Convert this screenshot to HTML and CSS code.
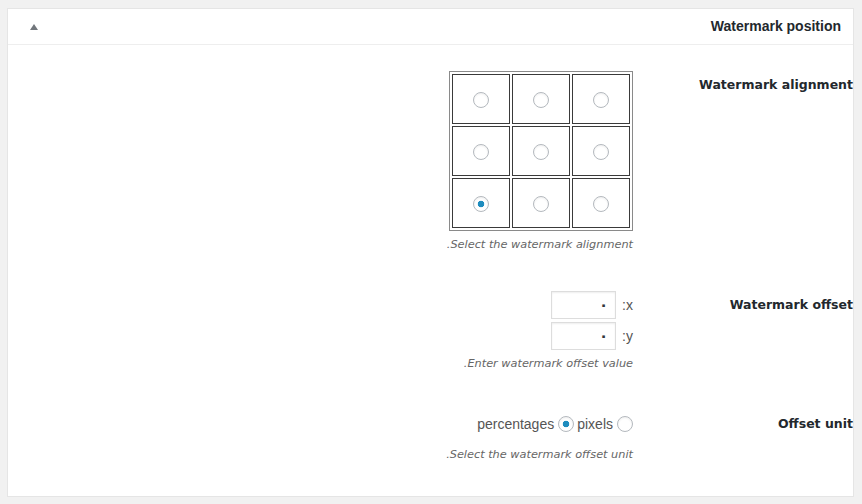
FILE: index.html
```html
<!DOCTYPE html>
<html dir="rtl" lang="en">
<head>
<meta charset="utf-8">
<title>Watermark position</title>
<link rel="stylesheet" href="styles.css">
</head>
<body>
<div class="postbox">
  <div class="postbox-header">
    <h2 class="hndle">Watermark position</h2>
    <button class="handlediv" type="button" aria-label="Toggle panel"><span class="toggle-arrow"></span></button>
  </div>
  <div class="inside">
    <table class="form-table">
      <tr>
        <th>Watermark alignment</th>
        <td>
          <table class="align-grid">
            <tr>
              <td><input type="radio" name="align" class="radio"></td>
              <td><input type="radio" name="align" class="radio"></td>
              <td><input type="radio" name="align" class="radio"></td>
            </tr>
            <tr>
              <td><input type="radio" name="align" class="radio"></td>
              <td><input type="radio" name="align" class="radio"></td>
              <td><input type="radio" name="align" class="radio"></td>
            </tr>
            <tr>
              <td><input type="radio" name="align" class="radio"></td>
              <td><input type="radio" name="align" class="radio"></td>
              <td><input type="radio" name="align" class="radio" checked></td>
            </tr>
          </table>
          <p class="description">Select the watermark alignment.</p>
        </td>
      </tr>
      <tr>
        <th>Watermark offset</th>
        <td>
          <div class="offset-fields">
            <label class="offset-line"><span class="axis">x:</span><input type="text" class="offset-input" value="٠"></label>
            <label class="offset-line"><span class="axis">y:</span><input type="text" class="offset-input" value="٠"></label>
          </div>
          <p class="description">Enter watermark offset value.</p>
        </td>
      </tr>
      <tr>
        <th>Offset unit</th>
        <td>
          <div class="unit-line">
            <label class="unit"><input type="radio" name="unit" class="radio"><span>pixels</span></label>
            <label class="unit"><input type="radio" name="unit" class="radio" checked><span>percentages</span></label>
          </div>
          <p class="description desc-unit">Select the watermark offset unit.</p>
        </td>
      </tr>
    </table>
  </div>
</div>
</body>
</html>
```
FILE: styles.css
```css
html {
  background: #f1f1f1;
}
body {
  margin: 8px 8px 0 7px;
  background: #f1f1f1;
  font-family: "DejaVu Sans", Tahoma, sans-serif;
  font-size: 13px;
  color: #444;
}
.postbox {
  background: #fff;
  border: 1px solid #e5e5e5;
  box-shadow: 0 1px 1px rgba(0, 0, 0, 0.04);
}
.postbox-header {
  display: flex;
  align-items: center;
  justify-content: space-between;
  border-bottom: 1px solid #eee;
}
.hndle {
  margin: 0;
  padding: 8px 12px;
  line-height: 19px;
  font-family: "Liberation Sans", Arial, sans-serif;
  font-size: 14px;
  font-weight: bold;
  color: #23282d;
}
.handlediv {
  width: 36px;
  height: 35px;
  margin: 0 0 0 8px;
  padding: 0;
  border: 0;
  background: none;
  display: flex;
  align-items: center;
  justify-content: center;
}
.toggle-arrow {
  width: 0;
  height: 0;
  border-left: 4px solid transparent;
  border-right: 4px solid transparent;
  border-bottom: 6px solid #72777c;
}
.inside {
  margin: 11px 0 0;
  padding: 0 0 10px;
}
.form-table {
  width: 100%;
  border-collapse: collapse;
}
.form-table > tbody > tr > th {
  width: 200px;
  padding: 20px 0 20px 10px;
  vertical-align: top;
  text-align: right;
  font-size: 12.5px;
  line-height: 18px;
  font-weight: bold;
  color: #23282d;
}
.form-table > tbody > tr > td {
  padding: 15px 10px;
  vertical-align: top;
}
.align-grid {
  border: 1px solid #8a8a8a;
  border-spacing: 2px;
  margin: 0;
}
.align-grid td {
  width: 56px;
  height: 48px;
  padding: 0;
  border: 1px solid #3a3a3a;
  text-align: center;
  vertical-align: middle;
}
.radio {
  -webkit-appearance: none;
  appearance: none;
  display: inline-block;
  width: 16px;
  height: 16px;
  margin: 0;
  border: 1px solid #b4b9be;
  border-radius: 50%;
  background: #fff;
  box-shadow: inset 0 1px 2px rgba(0, 0, 0, 0.07);
  vertical-align: middle;
}
.radio:checked {
  background: radial-gradient(circle, #1e8cbe 0, #1e8cbe 3px, #fff 3.6px);
}
.align-grid .radio {
  margin-top: 2px;
}
.description {
  margin: 5px 0 7px;
  font-size: 11.3px;
  line-height: 18px;
  font-style: italic;
  color: #666;
}
.desc-unit {
  margin-top: 8px;
}
.offset-fields {
  display: flex;
  flex-direction: column;
  gap: 3px;
}
.offset-line {
  display: flex;
  align-items: center;
  gap: 6px;
}
.axis {
  font-family: "Liberation Sans", Arial, sans-serif;
  font-size: 14px;
  color: #555;
}
.offset-input {
  width: 65px;
  height: 28px;
  box-sizing: border-box;
  margin: 0;
  padding: 0 7px 0 4px;
  border: 1px solid #ddd;
  box-shadow: inset 0 1px 2px rgba(0, 0, 0, 0.07);
  background: #fff;
  color: #32373c;
  font-family: "DejaVu Sans", sans-serif;
  font-size: 15px;
  font-weight: bold;
  text-align: right;
  direction: rtl;
}
.unit-line {
  display: flex;
  align-items: center;
  height: 28px;
  gap: 3px;
}
.unit {
  display: flex;
  align-items: center;
  gap: 4px;
  font-family: "Liberation Sans", Arial, sans-serif;
  font-size: 14px;
  color: #555;
}
```
